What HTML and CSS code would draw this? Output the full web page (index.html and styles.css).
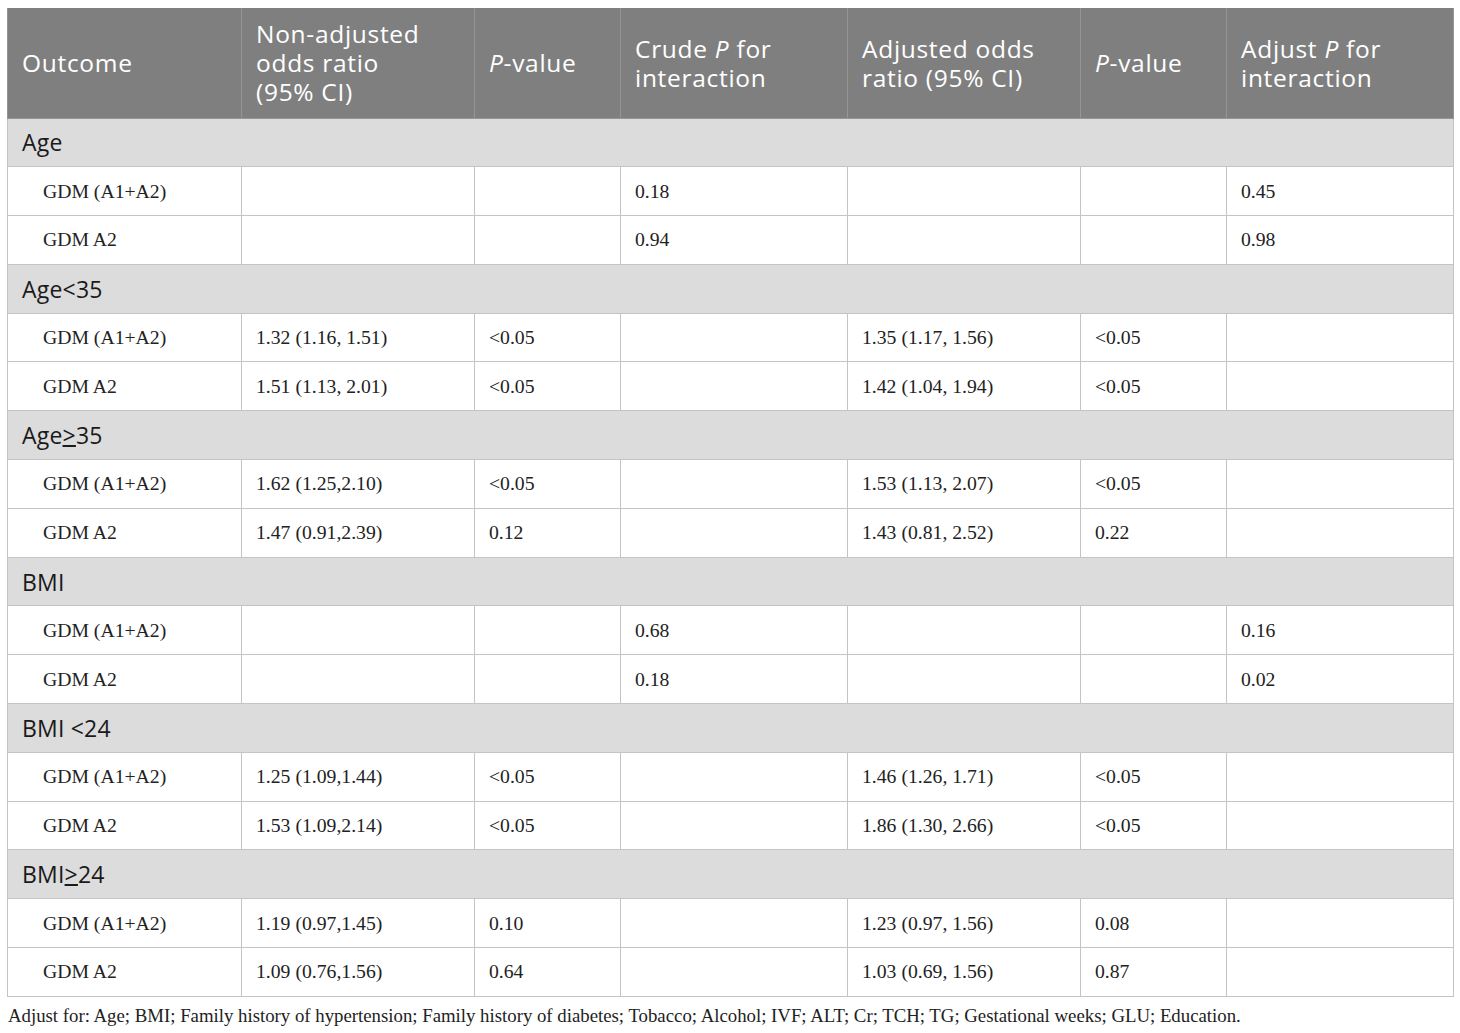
FILE: index.html
```html
<!DOCTYPE html>
<html>
<head>
<meta charset="utf-8">
<link rel="stylesheet" href="styles.css">
</head>
<body>
<table class="tbl">
<colgroup>
<col class="c1"><col class="c2"><col class="c3"><col class="c4"><col class="c5"><col class="c6"><col class="c7">
</colgroup>
<thead>
<tr>
<th>Outcome</th>
<th>Non-adjusted odds ratio (95% CI)</th>
<th><i>P</i>-value</th>
<th>Crude <i>P</i> for interaction</th>
<th>Adjusted odds ratio (95% CI)</th>
<th><i>P</i>-value</th>
<th>Adjust <i>P</i> for interaction</th>
</tr>
</thead>
<tbody>
<tr class="grp"><td colspan="7">Age</td></tr>
<tr><td class="lbl">GDM (A1+A2)</td><td></td><td></td><td>0.18</td><td></td><td></td><td>0.45</td></tr>
<tr><td class="lbl">GDM A2</td><td></td><td></td><td>0.94</td><td></td><td></td><td>0.98</td></tr>
<tr class="grp"><td colspan="7">Age&lt;35</td></tr>
<tr><td class="lbl">GDM (A1+A2)</td><td>1.32 (1.16, 1.51)</td><td>&lt;0.05</td><td></td><td>1.35 (1.17, 1.56)</td><td>&lt;0.05</td><td></td></tr>
<tr><td class="lbl">GDM A2</td><td>1.51 (1.13, 2.01)</td><td>&lt;0.05</td><td></td><td>1.42 (1.04, 1.94)</td><td>&lt;0.05</td><td></td></tr>
<tr class="grp"><td colspan="7">Age<u>&gt;</u>35</td></tr>
<tr><td class="lbl">GDM (A1+A2)</td><td>1.62 (1.25,2.10)</td><td>&lt;0.05</td><td></td><td>1.53 (1.13, 2.07)</td><td>&lt;0.05</td><td></td></tr>
<tr><td class="lbl">GDM A2</td><td>1.47 (0.91,2.39)</td><td>0.12</td><td></td><td>1.43 (0.81, 2.52)</td><td>0.22</td><td></td></tr>
<tr class="grp"><td colspan="7">BMI</td></tr>
<tr><td class="lbl">GDM (A1+A2)</td><td></td><td></td><td>0.68</td><td></td><td></td><td>0.16</td></tr>
<tr><td class="lbl">GDM A2</td><td></td><td></td><td>0.18</td><td></td><td></td><td>0.02</td></tr>
<tr class="grp"><td colspan="7">BMI &lt;24</td></tr>
<tr><td class="lbl">GDM (A1+A2)</td><td>1.25 (1.09,1.44)</td><td>&lt;0.05</td><td></td><td>1.46 (1.26, 1.71)</td><td>&lt;0.05</td><td></td></tr>
<tr><td class="lbl">GDM A2</td><td>1.53 (1.09,2.14)</td><td>&lt;0.05</td><td></td><td>1.86 (1.30, 2.66)</td><td>&lt;0.05</td><td></td></tr>
<tr class="grp"><td colspan="7">BMI<u>&gt;</u>24</td></tr>
<tr><td class="lbl">GDM (A1+A2)</td><td>1.19 (0.97,1.45)</td><td>0.10</td><td></td><td>1.23 (0.97, 1.56)</td><td>0.08</td><td></td></tr>
<tr><td class="lbl">GDM A2</td><td>1.09 (0.76,1.56)</td><td>0.64</td><td></td><td>1.03 (0.69, 1.56)</td><td>0.87</td><td></td></tr>
</tbody>
</table>
<p class="note">Adjust for: Age; BMI; Family history of hypertension; Family history of diabetes; Tobacco; Alcohol; IVF; ALT; Cr; TCH; TG; Gestational weeks; GLU; Education.</p>
</body>
</html>
```
FILE: styles.css
```css
html, body { margin: 0; padding: 0; background: #fff; }
body { padding: 8px 7px 0 7px; }
.tbl {
  border-collapse: collapse;
  table-layout: fixed;
  width: 1446px;
}
.c1 { width: 234px; }
.c2 { width: 233px; }
.c3 { width: 146px; }
.c4 { width: 227px; }
.c5 { width: 233px; }
.c6 { width: 146px; }
.c7 { width: 227px; }
.tbl th {
  background: #7f7f7f;
  color: #fff;
  font-family: "Open Sans", "Lato", sans-serif;
  font-weight: 400;
  font-size: 24.5px;
  letter-spacing: 0.7px;
  line-height: 29px;
  text-align: left;
  vertical-align: middle;
  height: 110px;
  box-sizing: border-box;
  padding: 0 40px 0 14px;
  border: 1px solid #959595;
  border-top: none;
}
.tbl th i { font-style: italic; }
.tbl td {
  font-family: "Liberation Serif", "Times New Roman", serif;
  font-size: 19.7px;
  color: #222;
  height: 48.8px;
  box-sizing: border-box;
  padding: 0 14px;
  border: 1px solid #c4c4c4;
  vertical-align: middle;
}
.tbl td.lbl { padding-left: 35px; }
.tbl tr.grp td {
  background: #dcdcdc;
  font-family: "Open Sans", "Lato", sans-serif;
  font-size: 23px;
  letter-spacing: 0.2px;
  color: #1a1a1a;
  padding-left: 14px;
}
.tbl tr.grp td u { text-decoration: underline; text-underline-offset: 1px; }
.note {
  margin: 8px 0 0 1px;
  font-family: "Liberation Serif", "Times New Roman", serif;
  font-size: 18.8px;
  color: #222;
}
```
